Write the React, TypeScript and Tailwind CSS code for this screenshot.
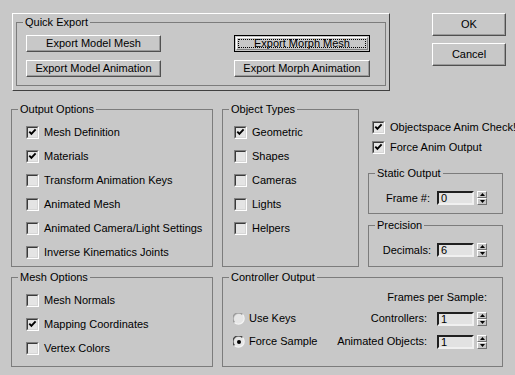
import React from 'react';

const FONT = { fontFamily: '"Liberation Sans", Arial, sans-serif' };

// classic win32 raised button
function Btn({ label, focused, className = '' }: { label: string; focused?: boolean; className?: string }) {
  if (focused) {
    return (
      <div className={`border border-black bg-[#c8c8c8] p-[1px] ${className}`}>
        <div className="h-full border border-t-white border-l-white border-b-[#808080] border-r-[#808080] p-[1px]">
          <div className="h-full flex items-center justify-center border border-dotted border-black">{label}</div>
        </div>
      </div>
    );
  }
  return (
    <div className={`flex items-center justify-center border border-t-white border-l-white border-b-[#505050] border-r-[#505050] shadow-[inset_-1px_-1px_0_#9a9a9a] ${className}`}>
      {label}
    </div>
  );
}

function Check({ checked }: { checked?: boolean }) {
  return (
    <span className="block w-[13px] h-[13px] shrink-0 border border-t-[#808080] border-l-[#808080] border-b-white border-r-white">
      <span className="block w-full h-full border border-t-[#3a3a3a] border-l-[#3a3a3a] border-b-[#d6d6d6] border-r-[#d6d6d6] bg-[#e4e4e4]">
        {checked && (
          <svg width="9" height="9" viewBox="0 0 9 9" className="block">
            <polyline points="1.3,3.6 3.4,5.8 7.6,1.4" fill="none" stroke="#000" strokeWidth="1.9" />
          </svg>
        )}
      </span>
    </span>
  );
}

function CheckRow({ label, checked, h = 'h-[24px]' }: { label: string; checked?: boolean; h?: string }) {
  return (
    <div className={`flex items-center gap-[5px] ${h}`}>
      <Check checked={checked} />
      <span className="whitespace-nowrap">{label}</span>
    </div>
  );
}

function Radio({ checked }: { checked?: boolean }) {
  return (
    <svg width="12" height="12" viewBox="0 0 12 12" className="shrink-0">
      <circle cx="6" cy="6" r="5" fill="#e6e6e6" />
      <path d="M1.5 9.5 A5 5 0 0 1 9.5 1.5" fill="none" stroke={checked ? '#404040' : '#9a9a9a'} strokeWidth="1.2" />
      <path d="M9.5 1.5 A5 5 0 0 1 1.5 9.5" fill="none" stroke="#f4f4f4" strokeWidth="1.2" />
      {checked && <circle cx="6" cy="6" r="2" fill="#000" />}
    </svg>
  );
}

function Spin({ value }: { value: string }) {
  return (
    <div className="flex items-center gap-[3px]">
      <div className="w-[37px] h-[14px] border-2 border-t-[#202020] border-l-[#202020] border-b-[#f0f0f0] border-r-[#f0f0f0] bg-[#e2e2e2] pl-[2px] leading-[10px]">
        {value}
      </div>
      <div className="w-[10px] h-[14px] flex flex-col">
        <div className="h-[7px] flex items-center justify-center border border-t-white border-l-white border-b-[#707070] border-r-[#707070]">
          <svg width="5" height="3" viewBox="0 0 5 3"><polygon points="0,3 5,3 2.5,0" fill="#000" /></svg>
        </div>
        <div className="h-[7px] flex items-center justify-center border border-t-white border-l-white border-b-[#707070] border-r-[#707070]">
          <svg width="5" height="3" viewBox="0 0 5 3"><polygon points="0,0 5,0 2.5,3" fill="#000" /></svg>
        </div>
      </div>
    </div>
  );
}

function Group({ title, className = '', children }: { title: string; className?: string; children?: React.ReactNode }) {
  return (
    <fieldset className={`border border-[#7c7c7c] min-w-0 ${className}`}>
      <legend className="ml-[6px] px-[2px] leading-[13px]">{title}</legend>
      {children}
    </fieldset>
  );
}

export default function App() {
  return (
    <div style={FONT} className="w-[515px] h-[375px] overflow-hidden bg-[#c8c8c8] pt-[13px] text-[11px] leading-[13px] text-black">
      {/* top row */}
      <div className="flex">
        <div className="ml-[12px] w-[378px] h-[78px] border border-t-white border-l-white border-b-[#404040] border-r-[#404040] px-[3px] pt-[2px]">
          <Group title="Quick Export" className="h-[70px]">
            <div className="pl-[9px] pr-[15px] pt-[6px] flex flex-col gap-[8px]">
              <div className="flex justify-between">
                <Btn label="Export Model Mesh" className="w-[135px] h-[17px]" />
                <Btn label="Export Morph Mesh" focused className="w-[136px] h-[17px]" />
              </div>
              <div className="flex justify-between">
                <Btn label="Export Model Animation" className="w-[135px] h-[17px]" />
                <Btn label="Export Morph Animation" className="w-[136px] h-[17px]" />
              </div>
            </div>
          </Group>
        </div>
        <div className="ml-[42px] flex flex-col gap-[7px]">
          <Btn label="OK" className="w-[74px] h-[23px]" />
          <Btn label="Cancel" className="w-[74px] h-[23px]" />
        </div>
      </div>

      {/* options grid */}
      <div className="mt-[12px] ml-[11px] grid grid-cols-[202px_137px_135px] gap-x-[9px] gap-y-[4px]">
        <Group title="Output Options" className="h-[164px]">
          <div className="pl-[14px] pt-[4px]">
            <CheckRow label="Mesh Definition" checked />
            <CheckRow label="Materials" checked />
            <CheckRow label="Transform Animation Keys" />
            <CheckRow label="Animated Mesh" />
            <CheckRow label="Animated Camera/Light Settings" />
            <CheckRow label="Inverse Kinematics Joints" />
          </div>
        </Group>

        <Group title="Object Types" className="h-[164px]">
          <div className="pl-[11px] pt-[4px]">
            <CheckRow label="Geometric" checked />
            <CheckRow label="Shapes" />
            <CheckRow label="Cameras" />
            <CheckRow label="Lights" />
            <CheckRow label="Helpers" />
          </div>
        </Group>

        <div className="flex flex-col h-[164px] pt-[14px]">
          <div className="pl-[4px]">
            <CheckRow label="Objectspace Anim Check!" checked h="h-[20px]" />
            <CheckRow label="Force Anim Output" checked h="h-[20px]" />
          </div>
          <Group title="Static Output" className="mt-[10px] h-[47px]">
            <div className="flex items-center justify-end gap-[7px] pr-[15px] pt-[11px]">
              <span>Frame #:</span>
              <Spin value="0" />
            </div>
          </Group>
          <Group title="Precision" className="mt-[5px] h-[48px]">
            <div className="flex items-center justify-end gap-[6px] pr-[15px] pt-[11px]">
              <span>Decimals:</span>
              <Spin value="6" />
            </div>
          </Group>
        </div>

        <Group title="Mesh Options" className="h-[96px]">
          <div className="pl-[14px] pt-[4px]">
            <CheckRow label="Mesh Normals" />
            <CheckRow label="Mapping Coordinates" checked />
            <CheckRow label="Vertex Colors" />
          </div>
        </Group>

        <Group title="Controller Output" className="col-span-2 h-[96px]">
          <div className="pt-[7px] pr-[15px]">
            <div className="text-right">Frames per Sample:</div>
            <div className="mt-[3px] flex items-center justify-between h-[23px] pl-[10px]">
              <div className="flex items-center gap-[4px]">
                <Radio />
                <span>Use Keys</span>
              </div>
              <div className="flex items-center gap-[10px]">
                <span>Controllers:</span>
                <Spin value="1" />
              </div>
            </div>
            <div className="flex items-center justify-between h-[23px] pl-[10px]">
              <div className="flex items-center gap-[4px]">
                <Radio checked />
                <span>Force Sample</span>
              </div>
              <div className="flex items-center gap-[10px]">
                <span>Animated Objects:</span>
                <Spin value="1" />
              </div>
            </div>
          </div>
        </Group>
      </div>
    </div>
  );
}
